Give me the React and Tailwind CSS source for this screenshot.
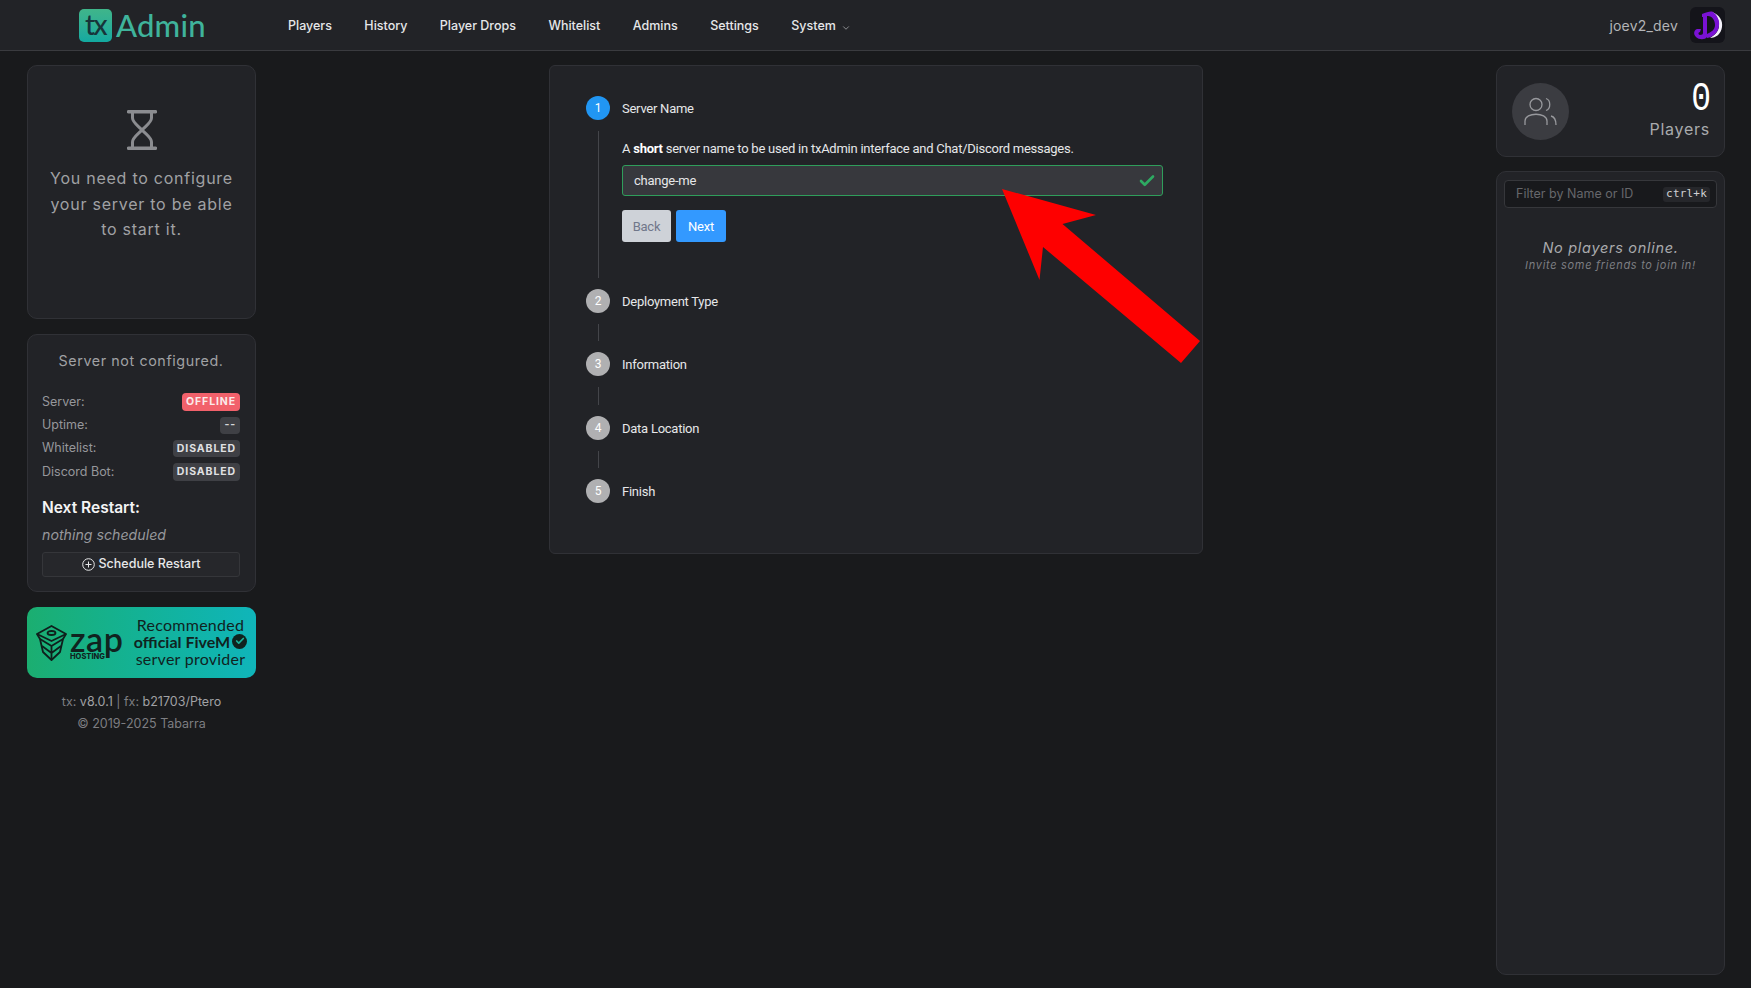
import React from 'react';
import { ChevronDown, Check } from 'lucide-react';

const navItems = ['Players', 'History', 'Player Drops', 'Whitelist', 'Admins', 'Settings'];

const steps = [
  { n: 2, label: 'Deployment Type' },
  { n: 3, label: 'Information' },
  { n: 4, label: 'Data Location' },
  { n: 5, label: 'Finish' },
];

const statusRows = [
  { label: 'Server:', value: 'OFFLINE', cls: 'bg-[#f2616b] text-[#fbeaea]' },
  { label: 'Uptime:', value: '--', cls: 'bg-[#3f4045] text-[#d5d6d8]' },
  { label: 'Whitelist:', value: 'DISABLED', cls: 'bg-[#3f4045] text-[#e0e1e3]' },
  { label: 'Discord Bot:', value: 'DISABLED', cls: 'bg-[#3f4045] text-[#e0e1e3]' },
];

const Header = () => (
  <header className="h-[51px] shrink-0 bg-[#222327] border-b border-[#3a3b3f] flex items-center pl-[79px] pr-[26px]">
    {/* logo */}
    <div className="flex items-center w-[209px]">
      <div className="w-[33px] h-[33px] rounded-[5px] bg-gradient-to-b from-[#3fb58a] to-[#12a9a0] flex items-center justify-center text-[#17343a] text-[28px] leading-none font-[Lato] font-medium tracking-[-1.5px] pb-[3px]">
        tx
      </div>
      <span className="ml-[4px] text-[31px] leading-none font-[Lato] font-medium tracking-[0.2px] text-[#3fb39b]">Admin</span>
    </div>
    <nav className="flex items-center gap-[32.4px] pt-[3px] text-[12.5px] font-medium text-[#e6e7e9]">
      {navItems.map((item) => (
        <span key={item}>{item}</span>
      ))}
      <span className="flex items-center gap-[5px]">
        System
        <ChevronDown size={10} className="text-[#a0a1a5] mt-[2px]" />
      </span>
    </nav>
    <div className="ml-auto flex items-center gap-[12px]">
      <span className="text-[14px] tracking-[0.2px] text-[#b4b5b8]">joev2_dev</span>
      <div className="w-[35px] h-[36px] rounded-[6px] bg-[#14141a]">
        <svg width="35" height="36" viewBox="0 0 35 36">
          <path d="M22 5 C30 8 33 14 32 20 C31 27 26 31 20 31 C25 28 29 24 29 18 C29 12 26 8 22 5 Z" fill="#f4f1fa" />
          <path d="M12 7 C17 5 21 4 23 5 C27 8 30 13 29 19 C28 26 23 30 17 31 L17 27 C21 25 25 23 25 18 C25 13 22 9 18 9 L17 9 L17 30 C15 33 9 33 6 30 C3 27 4 23 7 22 L11 22 L10 25 C8 25 8 28 10 28 C12 28 13 27 13 26 L13 10 L12 10 Z" fill="#7a12d4" />
        </svg>
      </div>
    </div>
  </header>
);

const LeftSidebar = () => (
  <aside className="w-[229px] shrink-0 flex flex-col font-[Inter]">
    <div className="h-[254px] bg-[#222327] border border-[#303136] rounded-[10px] flex flex-col items-center pt-[44px]">
      <svg width="30" height="40" viewBox="0 0 30 40" fill="none" stroke="#8b8c90" strokeWidth="3">
        <path d="M1.5 1.7 H28.5 M1.5 38.3 H28.5" strokeLinecap="round" strokeWidth="3.4" />
        <path d="M5.5 2 V8 C5.5 12 10 15 15 20 C20 25 24.5 28 24.5 32 V38" />
        <path d="M24.5 2 V8 C24.5 12 20 15 15 20 C10 25 5.5 28 5.5 32 V38" />
      </svg>
      <p className="mt-[16px] text-center text-[16px] leading-[25.5px] tracking-[0.75px] text-[#a0a1a4] px-[10px]">
        You need to configure<br />your server to be able<br />to start it.
      </p>
    </div>

    <div className="mt-[15px] h-[258px] bg-[#222327] border border-[#303136] rounded-[10px] pl-[14px] pr-[15px] pt-[16px]">
      <p className="text-center text-[14.3px] leading-[20px] tracking-[0.6px] text-[#a0a1a4]">Server not configured.</p>
      <div className="mt-[22px] flex flex-col gap-[5.3px]">
        {statusRows.map((row) => (
          <div key={row.label} className="h-[18px] flex items-center justify-between text-[12.5px] text-[#96979b]">
            <span>{row.label}</span>
            <span className={`h-[17.5px] px-[4px] rounded-[4px] flex items-center text-[10.5px] font-bold tracking-[0.9px] ${row.cls}`}>{row.value}</span>
          </div>
        ))}
      </div>
      <p className="mt-[15px] text-[15.5px] leading-[24px] font-semibold text-[#f4f4f5]">Next Restart:</p>
      <p className="mt-[5px] text-[14.2px] leading-[20px] italic text-[#96979b]">nothing scheduled</p>
      <button className="mt-[7px] w-full h-[25px] bg-[#26272b] border border-[#35363a] rounded-[3px] flex items-center justify-center gap-[4px] text-[12.5px] font-medium text-[#e6e7e9]">
        <svg width="13" height="13" viewBox="0 0 13 13" fill="none" stroke="#e6e7e9" strokeWidth="1">
          <circle cx="6.5" cy="6.5" r="5.8" />
          <path d="M6.5 3.5 V9.5 M3.5 6.5 H9.5" />
        </svg>
        Schedule Restart
      </button>
    </div>

    {/* zap hosting banner */}
    <div className="mt-[15px] h-[71px] rounded-[10px] bg-gradient-to-r from-[#1bae70] to-[#10b5ba] flex items-center pl-[9px] text-[#10231f]">
      <svg width="31" height="36" viewBox="0 0 31 36" fill="none" stroke="#0f1f1c" strokeWidth="1.8" strokeLinejoin="round">
        <path d="M15.5 1 L30 9 L27 14 L24 27 L15.5 35 L7 27 L4 14 L1 9 Z" />
        <path d="M4 14 L15.5 21 L27 14 M15.5 21 V35 M1 9 L15.5 16 L30 9 M6 21 L15.5 28 L25 21" />
        <ellipse cx="15.5" cy="8" rx="4" ry="2" />
      </svg>
      <div className="ml-[3px] w-[56px] flex flex-col items-start pt-[3px]">
        <span className="text-[34px] leading-[22px] font-[Lato] font-semibold tracking-[0.6px]">zap</span>
        <span className="mt-[3px] text-[7.5px] leading-[8px] font-[Inter] font-extrabold">HOSTING</span>
      </div>
      <div className="flex-1 pb-[3px] pr-[1px] text-center text-[16px] leading-[17px] font-[Lato] text-[#10231f] tracking-[0.25px] whitespace-nowrap">
        <div>Recommended</div>
        <div className="flex items-center justify-center gap-[2px] font-bold tracking-[0]">
          official FiveM
          <span className="w-[15px] h-[15px] rounded-full bg-[#10231f] flex items-center justify-center shrink-0">
            <Check size={10} strokeWidth={4} className="text-[#1bb39a]" />
          </span>
        </div>
        <div>server provider</div>
      </div>
    </div>

    <div className="mt-[13px] text-center text-[12.5px] leading-[22px] text-[#7d7e82]">
      <p>tx: <span className="text-[#a0a1a4]">v8.0.1</span> | fx: <span className="text-[#a0a1a4]">b21703/Ptero</span></p>
      <p>© 2019-2025 Tabarra</p>
    </div>
  </aside>
);

const StepCircle = ({ n, active }) => (
  <span className={`w-[24px] h-[24px] rounded-full flex items-center justify-center text-[12px] text-white ${active ? 'bg-[#2196f3]' : 'bg-[#b0b0b2]'}`}>
    {n}
  </span>
);

const Wizard = () => (
  <section className="w-[654px] h-[489px] bg-[#222327] border border-[#303136] rounded-[6px] pt-[30px] pl-[36px] font-[Roboto] text-[13px] tracking-[-0.25px] text-[#e6e7e9]">
    <div className="flex items-center gap-[12px] h-[24px]">
      <StepCircle n={1} active />
      <span className="pt-[1px]">Server Name</span>
    </div>
    <div className="mt-[11px] ml-[12px] h-[147px] border-l border-[#44454a] pl-[23px] w-[565px]">
      <p className="mt-[8px] pt-[8px] leading-[20px]">
        A <strong className="font-bold text-white">short</strong> server name to be used in txAdmin interface and Chat/Discord messages.
      </p>
      <div className="mt-[6px] w-[541px] h-[31px] bg-[#37383d] border border-[#2f9e5b] rounded-[3px] flex items-center justify-between pl-[11px] pr-[6px]">
        <span className="pt-[1px]">change-me</span>
        <Check size={18} strokeWidth={3.5} className="text-[#2eaa62]" />
      </div>
      <div className="mt-[14px] flex gap-[5px]">
        <button className="w-[49px] h-[32px] pt-[1px] rounded-[3px] bg-[#ced2d8] text-[#70778a]">Back</button>
        <button className="w-[50px] h-[32px] pt-[1px] rounded-[3px] bg-[#3399ff] text-white">Next</button>
      </div>
    </div>
    <div className="mt-[11px] flex flex-col">
      {steps.map((step, i) => (
        <div key={step.n}>
          <div className="flex items-center gap-[12px] h-[24px]">
            <StepCircle n={step.n} />
            <span className="pt-[1px]">{step.label}</span>
          </div>
          {i < steps.length - 1 && <div className="ml-[12px] my-[11px] h-[17.4px] border-l border-[#44454a]" />}
        </div>
      ))}
    </div>
  </section>
);

const RightSidebar = () => (
  <aside className="w-[229px] shrink-0 flex flex-col font-[Inter]">
    <div className="h-[92px] bg-[#222327] border border-[#303136] rounded-[10px] flex items-center justify-between pl-[15px] pr-[14px]">
      <div className="w-[57px] h-[57px] rounded-full bg-[#3b3c41] flex items-center justify-center">
        <svg width="33" height="29" viewBox="0 0 33 29" fill="none" stroke="#98999d" strokeWidth="1.3">
          <circle cx="12" cy="7.5" r="6" />
          <path d="M22 1.5 C27 3 27 12 22 13.5" />
          <path d="M1 28 V24 C1 15 23 15 23 24 V28" />
          <path d="M27 19 C31 20 32 23 32 28" />
        </svg>
      </div>
      <div className="flex flex-col items-end">
        <span className="text-[33px] leading-[36px] text-white font-['Liberation_Mono'] scale-y-[1.25] mr-[-1px]">0</span>
        <span className="text-[16px] leading-[22px] tracking-[0.75px] text-[#a9aaad]">Players</span>
      </div>
    </div>
    <div className="mt-[14px] flex-1 bg-[#222327] border border-[#303136] rounded-[10px] px-[7px] pt-[8px]">
      <div className="h-[28px] bg-[#18191c] border border-[#36373b] rounded-[4px] flex items-center justify-between pl-[11px] pr-[6px]">
        <span className="text-[12.5px] text-[#66676b]">Filter by Name or ID</span>
        <span className="h-[15px] px-[3px] rounded-[3px] bg-[#26272b] flex items-center text-[11px] font-['DejaVu_Sans_Mono'] tracking-[0.2px] text-[#d0d1d3]">ctrl+k</span>
      </div>
      <div className="mt-[30px] text-center italic">
        <p className="text-[14.5px] leading-[20px] tracking-[0.7px] text-[#a9aaad]">No players online.</p>
        <p className="text-[11px] leading-[14px] tracking-[0.7px] text-[#7d7e82]">Invite some friends to join in!</p>
      </div>
    </div>
  </aside>
);

const App = () => (
  <div className="relative h-screen flex flex-col overflow-hidden bg-[#191a1c] font-[Inter]">
    <Header />
    <div className="flex-1 min-h-0 flex items-stretch justify-between pt-[14px] pb-[13px] pl-[27px] pr-[26px]">
      <LeftSidebar />
      <Wizard />
      <RightSidebar />
    </div>
    {/* red arrow annotation over the page */}
    <svg className="absolute left-0 top-0 pointer-events-none" width="1751" height="988" viewBox="0 0 1751 988">
      <polygon points="1002,189 1096,215 1062.5,224 1200,341 1181,363 1043,247 1039.5,280" fill="#fe0000" />
    </svg>
  </div>
);

export default App;
